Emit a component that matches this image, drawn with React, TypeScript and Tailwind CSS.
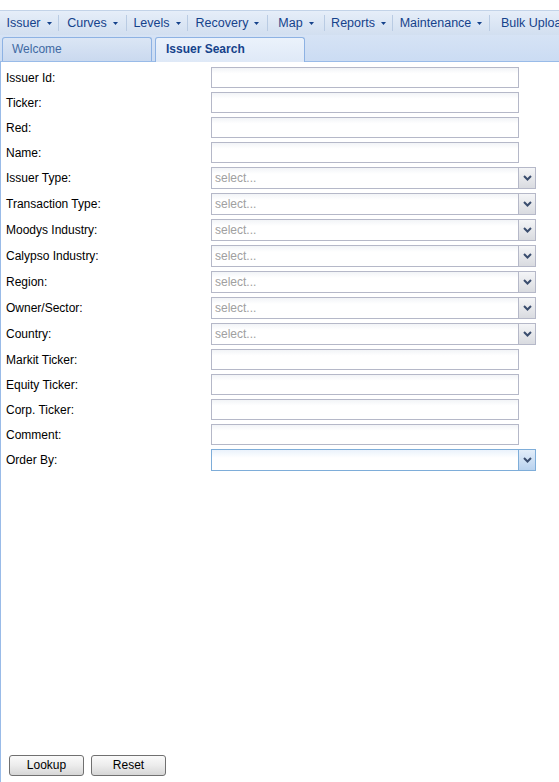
import React from "react";

const menus = [
  { name: "Issuer", w: "w-[58px]" },
  { name: "Curves", w: "w-[67px]" },
  { name: "Levels", w: "w-[60px]" },
  { name: "Recovery", w: "w-[79px]" },
  { name: "Map", w: "w-[56px]" },
  { name: "Reports", w: "w-[67px]" },
  { name: "Maintenance", w: "w-[96px]" },
];

type Field = { label: string; kind: "text" | "combo" | "order" };

const fields: Field[] = [
  { label: "Issuer Id:", kind: "text" },
  { label: "Ticker:", kind: "text" },
  { label: "Red:", kind: "text" },
  { label: "Name:", kind: "text" },
  { label: "Issuer Type:", kind: "combo" },
  { label: "Transaction Type:", kind: "combo" },
  { label: "Moodys Industry:", kind: "combo" },
  { label: "Calypso Industry:", kind: "combo" },
  { label: "Region:", kind: "combo" },
  { label: "Owner/Sector:", kind: "combo" },
  { label: "Country:", kind: "combo" },
  { label: "Markit Ticker:", kind: "text" },
  { label: "Equity Ticker:", kind: "text" },
  { label: "Corp. Ticker:", kind: "text" },
  { label: "Comment:", kind: "text" },
  { label: "Order By:", kind: "order" },
];

function Arrow() {
  return (
    <svg width="5" height="3" viewBox="0 0 5 3" className="ml-[6px] mt-[1px]">
      <path d="M0 0h5L2.5 3z" fill="#15428b" />
    </svg>
  );
}

function Chevron() {
  return (
    <svg width="9" height="6" viewBox="0 0 9 6">
      <path d="M1 1l3.5 3.5L8 1" fill="none" stroke="#3a4d6e" strokeWidth="2" />
    </svg>
  );
}

function Row({ field }: { field: Field }) {
  const isCombo = field.kind !== "text";
  return (
    <div className={`flex items-center ${isCombo ? "h-[26px]" : "h-[25px]"}`}>
      <div className="w-[210px] pl-[5px] text-[12px] text-black">{field.label}</div>
      {field.kind === "text" && (
        <div className="w-[308px] h-[21px] border border-[#b5b8c8] bg-gradient-to-b from-[#f2f4f7] to-white to-[30%]" />
      )}
      {field.kind === "combo" && (
        <div className="flex h-[22px]">
          <div className="w-[308px] h-[22px] border border-[#b5b8c8] bg-gradient-to-b from-[#f2f4f7] to-white to-[30%] pl-[3px] text-[12px] leading-[20px] text-[#a0a0a0]">
            select...
          </div>
          <div className="w-[17px] h-[22px] border border-l-0 border-[#b5b8c8] bg-gradient-to-b from-[#f4f5f7] to-[#d9dbe0] flex items-center justify-center">
            <Chevron />
          </div>
        </div>
      )}
      {field.kind === "order" && (
        <div className="flex h-[22px]">
          <div className="w-[308px] h-[22px] border border-[#7eadd9] bg-gradient-to-b from-[#eaf2fb] to-white to-[40%]" />
          <div className="w-[17px] h-[22px] border border-l-0 border-[#7eadd9] bg-gradient-to-b from-[#e3eefa] to-[#b9d2ee] flex items-center justify-center">
            <Chevron />
          </div>
        </div>
      )}
    </div>
  );
}

export default function App() {
  return (
    <div className="w-[559px] h-[782px] bg-white overflow-hidden flex flex-col font-['Liberation_Sans',Arial,sans-serif]">
      <div className="h-[10px] shrink-0" />
      {/* Menu bar */}
      <div className="h-[25px] shrink-0 flex items-center border-t border-[#c3d3e8] bg-gradient-to-b from-[#e6eef9] to-[#d2dff0] text-[12.5px] text-[#15428b] whitespace-nowrap">
        {menus.map((m) => (
          <div key={m.name} className="flex items-center">
            <div className={`flex items-center justify-center ${m.w}`}>
              <span>{m.name}</span>
              <Arrow />
            </div>
            <div className="w-px h-[16px] bg-[#b9cbe3]" />
          </div>
        ))}
        <div className="pl-[11px]">Bulk Upload</div>
      </div>
      {/* Tab strip */}
      <div className="h-[27px] shrink-0 flex items-end gap-[3px] pl-[2px] bg-gradient-to-b from-[#d6e3f5] to-[#cbdcf3] border-b border-[#99bbe8] text-[12px]">
        <div className="w-[150px] h-[24px] rounded-t-[3px] border border-b-0 border-[#8db2e3] bg-gradient-to-b from-[#dbe6f5] to-[#cad9ef] pl-[9px] leading-[22px] text-[#416aa3]">
          Welcome
        </div>
        <div className="w-[150px] h-[25px] -mb-px rounded-t-[3px] border border-b-0 border-[#8db2e3] bg-gradient-to-b from-[#ebf2fb] to-[#dfe9f7] pl-[10px] leading-[22px] font-bold text-[#15428b]">
          Issuer Search
        </div>
      </div>
      {/* Form body */}
      <div className="flex-1 flex flex-col border-l border-[#99bbe8]">
        <div className="pt-[3px] flex flex-col">
          {fields.map((f) => (
            <Row key={f.label} field={f} />
          ))}
        </div>
        <div className="flex-1" />
        <div className="flex gap-[7px] pl-[8px] pb-[6px]">
          {["Lookup", "Reset"].map((b) => (
            <button
              key={b}
              className="w-[75px] h-[21px] rounded-[3px] border border-[#707070] bg-gradient-to-b from-[#fafafa] via-[#ececec] to-[#d6d6d6] text-[12px] text-black leading-[19px]"
            >
              {b}
            </button>
          ))}
        </div>
      </div>
    </div>
  );
}
